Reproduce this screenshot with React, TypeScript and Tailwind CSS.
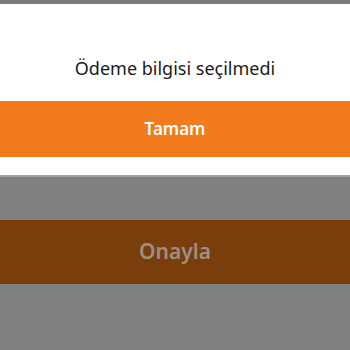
export default function App() {
  return (
    <div
      className="flex h-[350px] w-[350px] flex-col bg-[#808080]"
      style={{ fontFamily: '"Noto Sans", "Open Sans", sans-serif' }}
    >
      <div className="h-[4px] bg-[#7c7c7c]" />
      <section className="bg-white">
        <p className="h-[97px] pt-[50px] text-center text-[18px] leading-[28px] text-[#1a1a1a]">
          Ödeme bilgisi seçilmedi
        </p>
        <button
          type="button"
          className="flex h-[56px] w-full items-center justify-center bg-[#f27b1d] text-[17px] font-semibold text-white"
        >
          Tamam
        </button>
        <div className="h-[18px]" />
      </section>
      <div className="h-[2px] bg-[#a0a0a0]" />
      <div className="h-[43px]" />
      <button
        type="button"
        className="flex h-[64px] w-full items-center justify-center bg-[#7a3e0d] text-[21px] font-semibold text-[#9d8f83]"
      >
        Onayla
      </button>
    </div>
  );
}
